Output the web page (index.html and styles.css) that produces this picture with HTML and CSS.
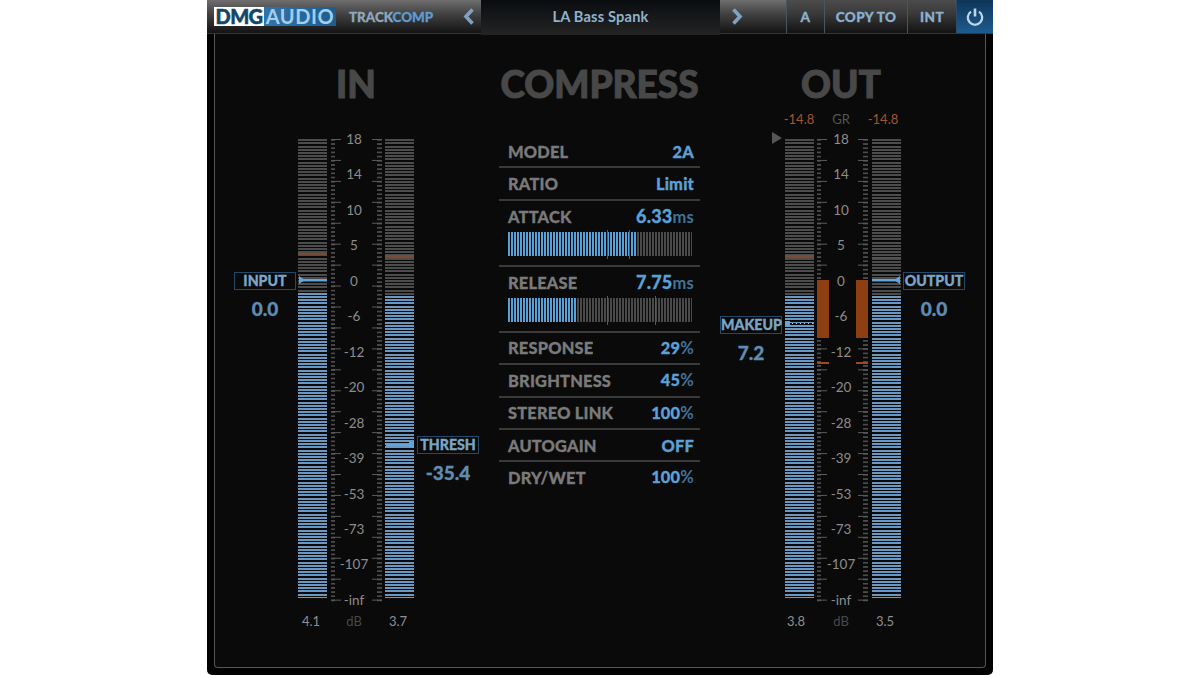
FILE: index.html
```html
<!DOCTYPE html>
<html lang="en">
<head>
<meta charset="utf-8">
<title>TrackComp</title>
<link rel="stylesheet" href="styles.css">
</head>
<body>
<div class="plugin">
  <header class="topbar">
    <div class="logo"><span class="logo-dmg">DMG</span><span class="logo-audio">AUDIO</span></div>
    <div class="product">TRACK<span>COMP</span></div>
    <div class="arrow arrow-prev">
      <svg width="12" height="17" viewBox="0 0 12 17"><path d="M9.5 1.5 3 8.5l6.5 7" fill="none" stroke="#7ea3c2" stroke-width="3.6"/></svg>
    </div>
    <div class="preset">LA Bass Spank</div>
    <div class="arrow arrow-next">
      <svg width="12" height="17" viewBox="0 0 12 17"><path d="M2.5 1.5 9 8.5l-6.5 7" fill="none" stroke="#7ea3c2" stroke-width="3.6"/></svg>
    </div>
    <div class="btn btn-a">A</div>
    <div class="btn btn-copy">COPY TO</div>
    <div class="btn btn-int">INT</div>
    <div class="btn btn-power">
      <svg width="20" height="20" viewBox="0 0 20 20"><path d="M6 4.6a7.2 7.2 0 1 0 8 0" fill="none" stroke="#b9d6ec" stroke-width="2.3"/><path d="M10 1.5v8" stroke="#b9d6ec" stroke-width="2.6"/></svg>
    </div>
  </header>

  <main class="panel">
    <section class="side side-in">
      <h2 class="heading">IN</h2>
      <div class="gr-row"></div>
      <div class="group">
        <div class="meter">
          <div class="fill" style="height:66.5%"></div>
          <div class="peak peak-thin" style="top:25%"></div>
          <div class="pointer pointer-input"></div>
        </div>
        <div class="scale">
          <div class="ticks ticks-left"></div>
          <div class="labels">
            <span>18</span><span>14</span><span>10</span><span>5</span><span>0</span><span>-6</span><span>-12</span><span>-20</span><span>-28</span><span>-39</span><span>-53</span><span>-73</span><span>-107</span><span>-inf</span>
          </div>
          <div class="ticks ticks-right"></div>
        </div>
        <div class="meter">
          <div class="fill" style="height:65.9%"></div>
          <div class="peak" style="top:25.4%"></div>
          <div class="pointer pointer-thresh"></div>
        </div>
        <div class="control control-input"><div class="tag">INPUT</div><div class="value">0.0</div></div>
        <div class="control control-thresh"><div class="tag">THRESH</div><div class="value">-35.4</div></div>
      </div>
      <div class="readouts">
        <span>4.1</span><span class="db">dB</span><span>3.7</span>
      </div>
    </section>

    <section class="center">
      <h2 class="heading">COMPRESS</h2>
      <div class="list">
        <div class="row"><span class="name">MODEL</span><span class="val">2A</span></div>
        <div class="row"><span class="name">RATIO</span><span class="val">Limit</span></div>
        <div class="row row-slider">
          <div class="row-head"><span class="name">ATTACK</span><span class="val">6.33<small>ms</small></span></div>
          <div class="bar">
            <div class="bar-fill" style="width:69.6%"></div>
            <i class="mark" style="left:53.8%"></i><i class="mark" style="left:65.8%"></i>
          </div>
        </div>
        <div class="row row-slider">
          <div class="row-head"><span class="name">RELEASE</span><span class="val">7.75<small>ms</small></span></div>
          <div class="bar">
            <div class="bar-fill" style="width:37%"></div>
            <i class="mark" style="left:53.8%"></i><i class="mark" style="left:79.9%"></i>
          </div>
        </div>
        <div class="row"><span class="name">RESPONSE</span><span class="val">29<small>%</small></span></div>
        <div class="row"><span class="name">BRIGHTNESS</span><span class="val">45<small>%</small></span></div>
        <div class="row"><span class="name">STEREO LINK</span><span class="val">100<small>%</small></span></div>
        <div class="row"><span class="name">AUTOGAIN</span><span class="val">OFF</span></div>
        <div class="row row-last"><span class="name">DRY/WET</span><span class="val">100<small>%</small></span></div>
      </div>
    </section>

    <section class="side side-out">
      <h2 class="heading">OUT</h2>
      <div class="gr-row">
        <span class="gr-val">-14.8</span><span class="gr-name">GR</span><span class="gr-val">-14.8</span>
      </div>
      <div class="group">
        <div class="meter">
          <div class="fill" style="height:65.9%"></div>
          <div class="peak" style="top:25.4%"></div>
          <div class="pointer pointer-makeup"></div>
        </div>
        <div class="scale">
          <div class="ticks ticks-left">
            <div class="gr-bar"></div><div class="gr-mark"></div>
          </div>
          <div class="labels">
            <span>18</span><span>14</span><span>10</span><span>5</span><span>0</span><span>-6</span><span>-12</span><span>-20</span><span>-28</span><span>-39</span><span>-53</span><span>-73</span><span>-107</span><span>-inf</span>
          </div>
          <div class="ticks ticks-right">
            <div class="gr-bar"></div><div class="gr-mark"></div>
          </div>
        </div>
        <div class="meter">
          <div class="fill" style="height:65.9%"></div>
          <div class="peak peak-thin" style="top:25.8%"></div>
          <div class="pointer pointer-output"></div>
        </div>
        <div class="clip-arrow"></div>
        <div class="control control-makeup"><div class="tag">MAKEUP</div><div class="value">7.2</div></div>
        <div class="control control-output"><div class="tag">OUTPUT</div><div class="value">0.0</div></div>
      </div>
      <div class="readouts">
        <span>3.8</span><span class="db">dB</span><span>3.5</span>
      </div>
    </section>
  </main>
</div>
</body>
</html>
```

FILE: styles.css
```css
* { box-sizing: border-box; }

html, body {
  margin: 0;
  height: 100%;
  background: #fff;
  overflow: hidden;
}

.plugin {
  width: 786px;
  height: 675px;
  margin: 0 auto;
  background: #020202;
  border-radius: 0 0 5px 5px;
  font-family: Lato, "Liberation Sans", sans-serif;
  display: flex;
  flex-direction: column;
}

/* top bar */
.topbar {
  display: flex;
  height: 34px;
  flex: none;
  background: linear-gradient(#6e6e6e 0, #444 40%, #131313 100%);
  border-bottom: 1px solid #2b3947;
}

.logo {
  display: flex;
  margin: 7px 0 0 7px;
  height: 19px;
  font-weight: 900;
  font-size: 20px;
  line-height: 19px;
}

.logo-dmg {
  width: 50px;
  background: #fff;
  color: #12466b;
  text-align: center;
  letter-spacing: -0.6px;
  -webkit-text-stroke: 0.5px #12466b;
}

.logo-audio {
  width: 72px;
  background: linear-gradient(90deg, #2f74a9, #1d5c8e);
  color: #a5cdec;
  text-align: center;
  letter-spacing: 0.6px;
  font-weight: 700;
}

.product {
  margin-left: 13px;
  width: 111px;
  font-weight: 900;
  font-size: 13.4px;
  line-height: 34px;
  color: #8da8bd;
  -webkit-text-stroke: 0.3px;
}

.product span { color: #5d9bd0; }

.arrow {
  display: flex;
  align-items: center;
  height: 33px;
}

.arrow-prev { width: 21px; padding-left: 3px; }
.arrow-next { width: 66px; padding-left: 11px; }

.preset {
  width: 239px;
  height: 35px;
  flex: none;
  background: linear-gradient(#090c0f, #242424);
  color: #90b2cd;
  font-weight: 700;
  font-size: 14.6px;
  line-height: 34px;
  text-align: center;
  letter-spacing: 0.2px;
  position: relative;
}

.btn {
  height: 33px;
  display: flex;
  align-items: center;
  justify-content: center;
  color: #8bb0d0;
  font-weight: 900;
  font-size: 13.5px;
  letter-spacing: 0.4px;
  background: linear-gradient(#4c4c4c, #3a3a3a 40%, #131313);
  border-left: 1px solid #4a5560;
  -webkit-text-stroke: 0.3px;
}

.btn-a { width: 38px; }
.btn-copy { width: 83px; }
.btn-int { width: 49px; }

.btn-power {
  width: 37px;
  background: linear-gradient(#0f3558, #1d5c90);
  border-left: 1px solid #2a4d6c;
}

/* panel */
.panel {
  flex: none;
  display: grid;
  grid-template-columns: 284px 201px 285px;
  height: 634px;
  margin: 0 7px;
  background: #0a0a0a;
  border: 1px solid #565656;
  border-top: 0;
  border-radius: 0 0 4px 4px;
}

.heading {
  margin: 30px 0 0;
  height: 40px;
  font-size: 37px;
  font-weight: 900;
  line-height: 40px;
  color: #484848;
  text-align: center;
  -webkit-text-stroke: 1px #484848;
}

.side-in { padding-left: 83px; }
.side-out { padding-left: 85px; }
.side-in .heading { margin-left: -83px; margin-right: 2px; }
.side-out .heading { margin-left: -85px; margin-right: 3px; }

.gr-row {
  display: grid;
  grid-template-columns: 28px 56px 28px;
  height: 16px;
  margin-top: 7px;
  font-size: 13px;
  line-height: 16px;
  text-align: center;
}

.gr-val { color: #a5552a; white-space: nowrap; display: flex; justify-content: center; }
.gr-name { color: #555; }

/* meters */
.group {
  position: relative;
  display: flex;
  width: 116px;
  height: 477px;
  margin-top: 4px;
  padding-top: 7px;
}

.meter {
  position: relative;
  flex: none;
  width: 29px;
  height: 460px;
  background: #4c4c4c;
}

.meter::after {
  content: "";
  position: absolute;
  inset: 0;
  background: repeating-linear-gradient(#0a0a0a 0, #0a0a0a 1.2px, transparent 1.2px, transparent 3.2px);
}

.fill {
  position: absolute;
  left: 0;
  right: 0;
  bottom: 0;
  background: #6a98c0;
}

.peak {
  position: absolute;
  left: 0;
  right: 0;
  height: 3px;
  background: #7a4a32;
  z-index: 2;
}

.peak-thin { height: 1.5px; }

.pointer {
  position: absolute;
  z-index: 2;
  height: 2px;
  background: #5fa6dc;
}

.pointer::before {
  content: "";
  position: absolute;
  top: -3px;
}

.pointer-input { left: 1px; right: 0; top: 141px; }
.pointer-input::before {
  left: 0;
  border-left: 6px solid #5fa6dc;
  border-top: 4px solid transparent;
  border-bottom: 4px solid transparent;
}

.pointer-output { left: 0; right: 1px; top: 141px; }
.pointer-output::before {
  right: 0;
  border-right: 6px solid #5fa6dc;
  border-top: 4px solid transparent;
  border-bottom: 4px solid transparent;
}

.pointer-thresh { left: 1px; right: 0; top: 306px; height: 1.5px; }
.pointer-thresh::before {
  top: -2px;
  right: 0;
  width: 5px;
  height: 5px;
  background: #5fa6dc;
}

.pointer-makeup {
  left: 0;
  right: 1px;
  top: 185px;
  height: 1px;
  background: repeating-linear-gradient(90deg, #0a0a0a 0, #0a0a0a 3px, #a9c6dc 3px, #a9c6dc 4px);
}
.pointer-makeup::before {
  top: -2px;
  left: 0;
  width: 5px;
  height: 5px;
  background: #5fa6dc;
}

/* scale */
.scale {
  flex: none;
  width: 58px;
  height: 470px;
  margin-top: -7px;
  position: relative;
  display: flex;
}

.ticks {
  position: relative;
  flex: none;
  width: 10px;
  height: 464px;
  margin-top: 8px;
  background-repeat: repeat-y;
}

.ticks-left {
  margin-left: 4px;
  background-image:
    linear-gradient(#5a5a5a 1.4px, transparent 1.4px),
    linear-gradient(#4c4c4c 1.4px, transparent 1.4px);
  background-size: 10px 20.95px, 4px 4.19px;
  background-position: left top, left top;
}

.ticks-right {
  margin-right: 3px;
  background-image:
    linear-gradient(#5a5a5a 1.4px, transparent 1.4px),
    linear-gradient(#4c4c4c 1.4px, transparent 1.4px);
  background-size: 10px 20.95px, 5px 4.19px;
  background-position: right top, right top;
}

.labels {
  flex: 1;
  min-width: 0;
  height: 477px;
  padding-right: 5px;
  display: flex;
  flex-direction: column;
  justify-content: space-between;
  align-items: center;
  color: #8d8d8d;
  font-size: 13.5px;
  line-height: 16px;
}

.labels span { white-space: nowrap; }

.side-out .ticks-left { margin-left: 3px; }
.side-out .ticks-right { margin-right: 4px; }
.side-out .labels { padding-right: 3px; }

.gr-bar {
  position: absolute;
  left: -0.5px;
  top: 141px;
  width: 12px;
  height: 58px;
  background: #8e3f12;
}

.gr-mark {
  position: absolute;
  left: 0;
  width: 12px;
  top: 223px;
  height: 1.5px;
  background: #a0481c;
}

.ticks-right .gr-bar { left: -2px; }
.ticks-right .gr-mark { left: -2px; }

.clip-arrow {
  position: absolute;
  left: -13px;
  top: 1px;
  border-left: 10px solid #555;
  border-top: 6px solid transparent;
  border-bottom: 6px solid transparent;
}

/* knob tags */
.control {
  position: absolute;
  width: 62px;
  display: flex;
  flex-direction: column;
  align-items: center;
}

.control-input { left: -64px; top: 141px; }
.control-thresh { left: 119px; top: 305px; }
.control-makeup { left: -65px; top: 185px; }
.control-output { left: 118px; top: 141px; }

.tag {
  width: 100%;
  height: 18px;
  border: 1px solid #22486a;
  color: #7ba5c7;
  font-size: 14.2px;
  font-weight: 900;
  line-height: 16px;
  text-align: center;
  white-space: nowrap;
  -webkit-text-stroke: 0.3px;
}

.value {
  margin-top: 9px;
  color: #5f8cb2;
  font-size: 19px;
  font-weight: 900;
  line-height: 20px;
  -webkit-text-stroke: 0.3px;
}

/* readouts */
.readouts {
  display: grid;
  height: 16px;
  margin-top: 5px;
  color: #8f8f8f;
  font-size: 13px;
  line-height: 16px;
  text-align: center;
}

.side-in .readouts { grid-template-columns: 26px 60px 28px; }
.side-out .readouts { grid-template-columns: 22px 68px 20px; }
.readouts .db { color: #484848; }

/* compress list */
.list { margin-top: 32px; }

.row {
  height: 32.4px;
  display: flex;
  justify-content: space-between;
  align-items: center;
  padding: 0 6px 0 9px;
  border-bottom: 2px solid #3a3a3a;
}

.row-last { border-bottom: 0; height: 30px; }

.row-slider {
  height: 66px;
  display: block;
}

.row-head {
  height: 31px;
  display: flex;
  justify-content: space-between;
  align-items: center;
}

.name {
  color: #7a7a7a;
  font-size: 16.4px;
  font-weight: 900;
  letter-spacing: 0.2px;
  -webkit-text-stroke: 0.3px;
}

.val {
  color: #5ba0d6;
  font-size: 16.4px;
  font-weight: 900;
  letter-spacing: 0.2px;
  -webkit-text-stroke: 0.3px;
}

.row-slider .val { font-size: 18px; }

.val small {
  font-size: 16.5px;
  font-weight: 700;
  color: #3f7399;
  -webkit-text-stroke: 0;
}

.bar {
  position: relative;
  width: 184px;
  height: 24px;
  background: #4a4a4a;
}

.bar::after {
  content: "";
  position: absolute;
  inset: 0;
  background: repeating-linear-gradient(90deg, transparent 0, transparent 2px, #0a0a0a 2px, #0a0a0a 3px);
}

.bar-fill {
  position: absolute;
  left: 0;
  top: 0;
  bottom: 0;
  background: #5a9fd6;
}

.mark {
  position: absolute;
  top: -2px;
  width: 1px;
  height: 29px;
  background: #8e4a24;
  z-index: 2;
}
```
